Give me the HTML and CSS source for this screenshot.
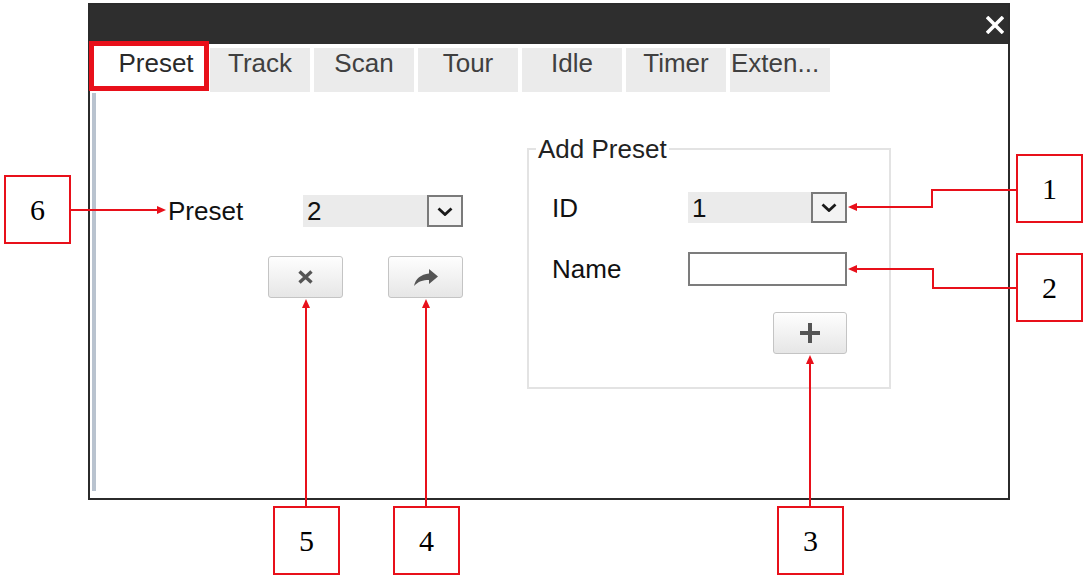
FILE: index.html
```html
<!DOCTYPE html>
<html lang="en">
<head>
<meta charset="utf-8">
<title>Preset</title>
<link rel="stylesheet" href="styles.css">
</head>
<body>
<div class="figure">
  <div class="window">
    <div class="titlebar">
      <svg class="close" viewBox="0 0 18 18" aria-label="Close"><path d="M1 1L17 17M17 1L1 17" stroke="#fff" stroke-width="3.6" fill="none"/></svg>
    </div>
    <div class="tabs">
      <div class="tab active">Preset</div>
      <div class="tab">Track</div>
      <div class="tab">Scan</div>
      <div class="tab">Tour</div>
      <div class="tab">Idle</div>
      <div class="tab">Timer</div>
      <div class="tab ext">Exten...</div>
    </div>
    <div class="content">
      <div class="bar"></div>
      <div class="left">
        <div class="row">
          <span class="label preset-label">Preset</span>
          <div class="select">
            <span class="value">2</span>
            <span class="drop"><svg viewBox="0 0 16 9" width="16" height="9"><path d="M1.5 1.5L8 7.5L14.5 1.5" stroke="#1a1a1a" stroke-width="2.8" fill="none"/></svg></span>
          </div>
        </div>
        <div class="actions">
          <button class="btn" type="button"><svg viewBox="0 0 15 14" width="15" height="14"><path d="M1.5 1.5L13.5 12.5M13.5 1.5L1.5 12.5" stroke="#555" stroke-width="3.4" fill="none"/></svg></button>
          <button class="btn" type="button"><svg viewBox="0 0 26 19" width="26" height="19"><path d="M16 1L25 8.5L16 16V12C10 12 5 13.5 1 18C2.5 11 8 6.3 16 5.6Z" fill="#555"/></svg></button>
        </div>
      </div>
      <fieldset class="group">
        <legend>Add Preset</legend>
        <div class="frow id-row">
          <span class="label flabel">ID</span>
          <div class="select wide">
            <span class="value">1</span>
            <span class="drop"><svg viewBox="0 0 16 9" width="16" height="9"><path d="M1.5 1.5L8 7.5L14.5 1.5" stroke="#1a1a1a" stroke-width="2.8" fill="none"/></svg></span>
          </div>
        </div>
        <div class="frow name-row">
          <span class="label flabel">Name</span>
          <input class="text" type="text" aria-label="Name">
        </div>
        <div class="frow add-row">
          <button class="btn add" type="button"><svg viewBox="0 0 20 20" width="20" height="20"><path d="M10 0V20M0 10H20" stroke="#555" stroke-width="4" fill="none"/></svg></button>
        </div>
      </fieldset>
    </div>
  </div>

  <div class="frame"></div>

  <svg class="leaders" width="1088" height="580" viewBox="0 0 1088 580">
    <g stroke="#e8101a" stroke-width="2" fill="none">
      <path d="M71 210H158"/>
      <path d="M1016 190H932V207H856"/>
      <path d="M1016 288H933V269H856"/>
      <path d="M810 506V363"/>
      <path d="M426 506V307"/>
      <path d="M306 506V307"/>
    </g>
    <g fill="#e8101a">
      <path d="M166 210L157 206L157 214Z"/>
      <path d="M848 207L857 203L857 211Z"/>
      <path d="M848 269L857 265L857 273Z"/>
      <path d="M810 355L806 364L814 364Z"/>
      <path d="M426 299L422 308L430 308Z"/>
      <path d="M306 299L302 308L310 308Z"/>
    </g>
  </svg>

  <div class="num n1">1</div>
  <div class="num n2">2</div>
  <div class="num n3">3</div>
  <div class="num n4">4</div>
  <div class="num n5">5</div>
  <div class="num n6">6</div>
</div>
</body>
</html>
```

FILE: styles.css
```css
* {
  box-sizing: border-box;
}

body {
  margin: 0;
  background: #fff;
  font-family: "Liberation Sans", Arial, sans-serif;
}

.figure {
  position: relative;
  width: 1088px;
  height: 580px;
  padding: 3px 0 0 88px;
  overflow: hidden;
}

.window {
  width: 922px;
  height: 497px;
  border: 2px solid #2b2b2b;
  display: flex;
  flex-direction: column;
  background: #fff;
}

.titlebar {
  height: 39px;
  flex: none;
  background: #2e2e2e;
  display: flex;
  align-items: center;
  justify-content: flex-end;
  padding-right: 4px;
}

.close {
  width: 18px;
  height: 18px;
  display: block;
}

.tabs {
  display: flex;
  gap: 4px;
  padding: 4px 0 0 16px;
  flex: none;
}

.tab {
  width: 100px;
  height: 44px;
  background: #ebebeb;
  color: #404040;
  font-size: 26px;
  line-height: 30px;
  padding-top: 0;
  text-align: center;
  white-space: nowrap;
  overflow: hidden;
}

.tab.active {
  background: #fff;
  color: #2a2a2a;
}

.tab.ext {
  text-align: left;
  padding-left: 1px;
}

.content {
  flex: 1;
  display: flex;
  min-height: 0;
}

.bar {
  width: 4px;
  margin: 1px 0 7px 2px;
  background: #b9c3cf;
  flex: none;
}

.left {
  width: 359px;
  margin-left: 72px;
  padding-top: 103px;
  flex: none;
}

.row {
  display: flex;
  align-items: center;
}

.label {
  font-size: 26px;
  color: #111;
  line-height: 30px;
}

.preset-label {
  width: 135px;
}

.select {
  display: flex;
  height: 32px;
  width: 160px;
}

.select .value {
  flex: 1;
  background: #ebebeb;
  font-size: 26px;
  color: #111;
  line-height: 32px;
  padding-left: 4px;
}

.drop {
  width: 36px;
  border: 2px solid #7a7a7a;
  background: #f3f3f3;
  display: flex;
  align-items: center;
  justify-content: center;
}

.drop svg {
  display: block;
}

.actions {
  display: flex;
  gap: 45px;
  margin: 29px 0 0 100px;
}

.btn {
  width: 75px;
  height: 42px;
  border: 1px solid #c4c4c4;
  border-radius: 3px;
  background: linear-gradient(#fefefe, #e6e6e6);
  display: flex;
  align-items: center;
  justify-content: center;
  padding: 0;
  margin: 0;
}

.btn svg {
  display: block;
}

.group {
  margin: 42px 0 0 0;
  padding: 0 7px;
  width: 364px;
  height: 255px;
  border: 2px solid #e3e3e3;
  min-width: 0;
  flex: none;
}

.group legend {
  font-size: 26px;
  line-height: 30px;
  color: #222;
  padding: 0 2px;
}

.frow {
  display: flex;
  align-items: center;
  padding-left: 16px;
}

.flabel {
  width: 136px;
}

.id-row {
  margin-top: 28px;
  height: 31px;
}

.select.wide {
  width: 159px;
  height: 31px;
}

.name-row {
  margin-top: 29px;
  height: 34px;
}

.text {
  width: 159px;
  height: 34px;
  border: 2px solid #7c7c7c;
  background: #fff;
  margin: 0;
  padding: 0 4px;
  font-size: 20px;
}

.add-row {
  margin-top: 26px;
  padding-left: 237px;
}

.btn.add {
  width: 74px;
}

.frame {
  position: absolute;
  left: 89px;
  top: 41px;
  width: 120px;
  height: 50px;
  border: 5px solid #e8101a;
}

.leaders {
  position: absolute;
  left: 0;
  top: 0;
}

.num {
  position: absolute;
  width: 67px;
  height: 69px;
  border: 2px solid #e8101a;
  background: #fff;
  font-family: "Liberation Serif", "Times New Roman", serif;
  font-size: 30px;
  color: #000;
  display: flex;
  align-items: center;
  justify-content: center;
}

.n1 {
  left: 1016px;
  top: 154px;
}

.n2 {
  left: 1016px;
  top: 253px;
}

.n3 {
  left: 777px;
  top: 506px;
}

.n4 {
  left: 393px;
  top: 506px;
}

.n5 {
  left: 273px;
  top: 506px;
}

.n6 {
  left: 4px;
  top: 175px;
}
```
